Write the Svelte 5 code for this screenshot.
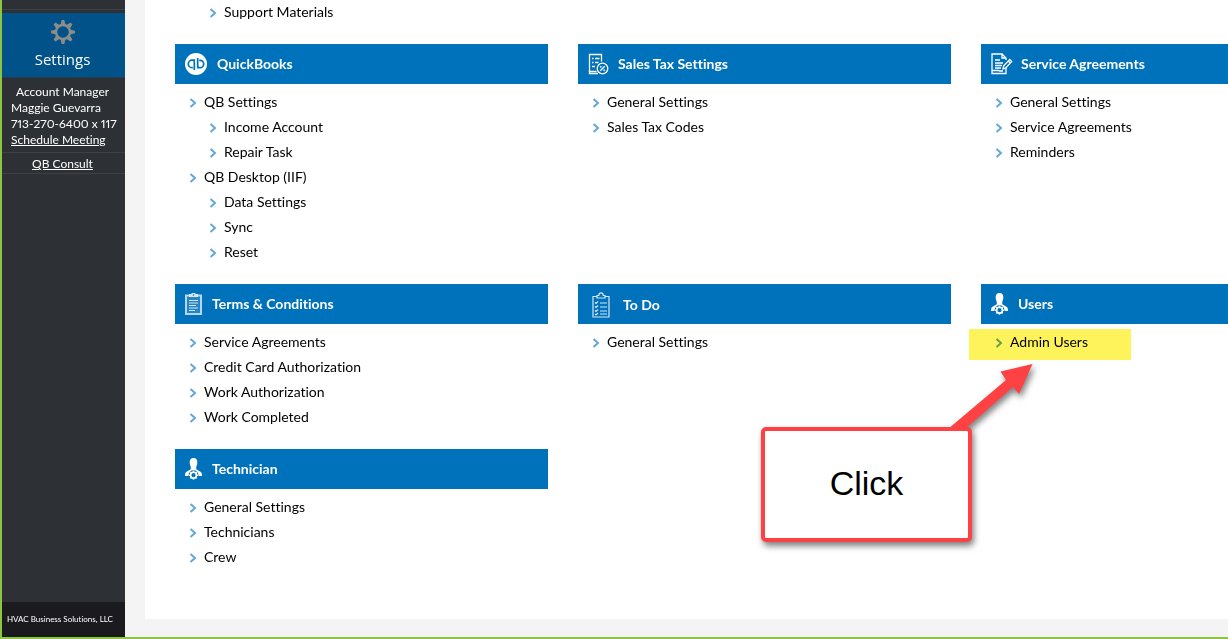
<script>
  const rows = [
    [
      {
        title: 'QuickBooks', icon: 'quickbooks',
        links: [['QB Settings'], ['Income Account', 1], ['Repair Task', 1], ['QB Desktop (IIF)'], ['Data Settings', 1], ['Sync', 1], ['Reset', 1]]
      },
      { title: 'Sales Tax Settings', icon: 'tax', links: [['General Settings'], ['Sales Tax Codes']] },
      { title: 'Service Agreements', icon: 'agreement', links: [['General Settings'], ['Service Agreements'], ['Reminders']] }
    ],
    [
      {
        title: 'Terms & Conditions', icon: 'terms',
        links: [['Service Agreements'], ['Credit Card Authorization'], ['Work Authorization'], ['Work Completed']]
      },
      { title: 'To Do', icon: 'todo', links: [['General Settings']] },
      { title: 'Users', icon: 'person', highlight: true, links: [['Admin Users']] }
    ],
    [{ title: 'Technician', icon: 'person', links: [['General Settings'], ['Technicians'], ['Crew']] }]
  ];
  const cards = rows.flat();
  const teeth = [0, 45, 90, 135, 180, 225, 270, 315];
</script>

{#snippet chevron()}
  <svg class="chevron" width="8" height="10" viewBox="0 0 8 10" aria-hidden="true">
    <path d="M1.5 1 6 5 1.5 9" fill="none" stroke="#65a8d6" stroke-width="2" />
  </svg>
{/snippet}

{#snippet item(label, nested)}
  <li class:nested><a href="#top">{@render chevron()}{label}</a></li>
{/snippet}

{#snippet icon(name)}
  {#if name === 'quickbooks'}
    <svg width="22" height="22" viewBox="0 0 22 22" aria-hidden="true">
      <circle cx="11" cy="11" r="11" fill="#fff" />
      <g fill="none" stroke="#0071bb" stroke-width="1.7">
        <path d="M9.3 17V7.2H7a3.7 3.7 0 0 0 0 7.4h.8" />
        <path d="M12.7 5v9.7H15a3.7 3.7 0 0 0 0-7.4h-.8" />
      </g>
    </svg>
  {:else if name === 'tax'}
    <svg width="22" height="22" viewBox="0 0 22 22" fill="none" stroke="#fff" stroke-width="1.3" aria-hidden="true">
      <path d="M13.500 8.500V1.500h-12v17h7M4 5.500h1.500M7 5.500h4.500M4 9.500h1.500M7 9.500h3.500M4 13.500h3" />
      <path d="M1.500 18v2.500H10" />
      <circle cx="14.500" cy="15.500" r="5.300" />
      <path d="m12.300 17.800 4.400-4.600" />
      <circle cx="12.700" cy="13.800" r=".3" /><circle cx="16.300" cy="17.200" r=".3" />
    </svg>
  {:else if name === 'agreement'}
    <svg width="22" height="22" viewBox="0 0 22 22" fill="none" stroke="#fff" stroke-width="1.3" aria-hidden="true">
      <path d="M15 7V5l-4-4H1v19.5h14V15M11 1v4h4M1 17.500h7" />
      <path d="M4 7h5M4 10h8M4 12.5h7M4 15h6M8 18h4" />
      <path d="m12 16 .7-3.2 6-6.3 2 2-6 6.4zM17.3 8l2 2" />
    </svg>
  {:else if name === 'terms'}
    <svg width="17" height="22" viewBox="0 0 17 22" aria-hidden="true">
      <path d="M1 2.5h15v18.5H1z" fill="#2584c5" stroke="#b5d6ec" stroke-width="2" />
      <path d="M4 4V1h2.5a2 2 0 0 1 4 0H13v3z" fill="#d5e8f4" />
      <path d="M4 7.5h9M4 10h9M4 12.5h7M4 15h9M4 17.5h6" stroke="#d0e5f3" stroke-width="1" />
      <circle cx="8.5" cy="2" r=".8" fill="#0071bb" />
    </svg>
  {:else if name === 'todo'}
    <svg width="18" height="26" viewBox="0 0 18 26" fill="none" stroke="#d5e8f4" stroke-width="1.2" aria-hidden="true">
      <path d="M5 4.500H1V25h16V4.500h-4" />
      <path d="M5 6V3.500h1.800C7 0 11 0 11.200 3.500H13V6z" />
      <path d="m3 10.5 1 1 2-2M3 14.5l1 1 2-2M3 18.5l1 1 2-2M3 22l1 1 2-2M8 11h7M8 15h7M8 19h7M8 22h7" />
    </svg>
  {:else}
    <svg width="17" height="22" viewBox="0 0 17 22" aria-hidden="true">
      <path d="M8.500 0C11.200 0 12.500 1.800 12.300 4.600c0 2-.8 3.400-1.100 4.600v2l4.300 2.500c1.200.8 1.500 2 1.500 4.300H0c0-2.300.3-3.500 1.500-4.300l4.300-2.500v-2C5.500 8 4.700 6.600 4.700 4.600 4.500 1.800 5.800 0 8.500 0z" fill="#fff" />
      <circle cx="8.500" cy="17.200" r="4.900" fill="#0071bb" />
      <circle cx="8.500" cy="17.200" r="2.900" fill="none" stroke="#fff" stroke-width="1.600" />
      <g stroke="#fff" stroke-width="1.500">
        {#each teeth as angle}
          <path d="M8.500 14v-1.300" transform="rotate({angle} 8.5 17.2)" />
        {/each}
      </g>
    </svg>
  {/if}
{/snippet}

<div class="page" id="top">
  <aside class="sidebar">
    <div class="previous"></div>
    <a class="settings" href="#top">
      <svg width="24" height="24" viewBox="0 0 24 24" aria-hidden="true">
        <circle cx="12" cy="12" r="7" fill="none" stroke="#8c8c8c" stroke-width="2.4" />
        <g fill="#8c8c8c">
          {#each teeth as angle}
            <path d="m9.5 5 1.200-5h2.600l1.200 5z" transform="rotate({angle} 12 12)" />
          {/each}
        </g>
      </svg>
      <span>Settings</span>
    </a>
    <div class="manager">
      <div class="role">Account Manager</div>
      <div>Maggie Guevarra</div>
      <div class="phone">713-270-6400 x 117</div>
      <a href="#top">Schedule Meeting</a>
    </div>
    <div class="consult"><a href="#top">QB Consult</a></div>
    <footer>HVAC Business Solutions, LLC</footer>
  </aside>

  <main>
    <div class="panel">
      <ul class="support">{@render item('Support Materials', true)}</ul>
      <div class="cards">
        {#each cards as card}
          <section>
            <h2 class={card.icon}>{@render icon(card.icon)}{card.title}</h2>
            <ul>
              {#each card.links as [label, nested]}
                {@render item(label, !!nested)}
              {/each}
            </ul>
            {#if card.highlight}<div class="highlight"></div>{/if}
          </section>
        {/each}
      </div>
    </div>
  </main>

  <div class="callout">
    <svg class="arrow" width="100" height="80" viewBox="0 0 100 80" aria-hidden="true">
      <path d="M84.500 4 71 34 65 27 17 69H0L58 20 52.500 11.500z" fill="#fe4244" />
    </svg>
    <div class="note">Click</div>
  </div>
</div>

<style>
  :global(body) { margin: 0; }
  .page {
    position: relative;
    display: flex;
    box-sizing: border-box;
    min-height: 100vh;
    overflow: hidden;
    border-left: 2px solid #8cc63f;
    border-bottom: 2px solid #8cc63f;
    background: #f4f4f4;
    font-family: Lato, sans-serif;
    font-variant-ligatures: none;
    color: #000;
  }
  .sidebar {
    display: flex;
    flex: 0 0 123px;
    flex-direction: column;
    min-width: 0;
    background: #2d3035;
    color: #fff;
    font-size: 12px;
    line-height: 16px;
  }
  .sidebar a { color: #fff; }
  .previous {
    height: 9px;
    margin-bottom: 3px;
    border-bottom: 1px solid #3d4045;
  }
  .sidebar .settings {
    display: flex;
    flex-direction: column;
    align-items: center;
    height: 57px;
    padding-top: 7px;
    padding-right: 2px;
    border-bottom: 1px solid #24404f;
    background: #005288;
    font: 15px/30px "Open Sans", sans-serif;
    text-decoration: none;
  }
  .settings svg { flex: none; }
  .manager {
    padding: 6px 0 4px 9px;
    border-bottom: 1px solid #3d4045;
    white-space: nowrap;
  }
  .role { padding-left: 5px; }
  .phone { font-variant-numeric: proportional-nums; }
  .consult {
    padding: 3px 2px 1px 0;
    border-bottom: 1px solid #3d4045;
    text-align: center;
  }
  footer {
    margin-top: auto;
    padding-left: 5px;
    background: #1b1b1f;
    font-size: 8px;
    line-height: 35px;
    white-space: nowrap;
  }
  main {
    flex: 1;
    min-width: 0;
    padding: 0 0 18px 20px;
  }
  .panel {
    box-sizing: border-box;
    min-height: 100%;
    padding: 0 30px 30px;
    background: #fff;
  }
  ul { margin: 0; padding: 0; list-style: none; }
  .cards {
    display: grid;
    grid-template-columns: repeat(3, minmax(373px, 1fr));
    gap: 19px 30px;
    margin-top: 19px;
  }
  section { position: relative; }
  h2 {
    display: flex;
    box-sizing: border-box;
    align-items: center;
    gap: 10px;
    height: 40px;
    margin: 0 0 6px;
    padding: 0 0 2px 10px;
    background: #0071bb;
    color: #fff;
    font-size: 14px;
    font-weight: 700;
  }
  h2 svg { margin-top: 2px; }
  h2.tax, h2.agreement { gap: 8px; }
  h2.todo {
    gap: 13px;
    padding-top: 2px;
    padding-left: 14px;
  }
  li {
    display: flex;
    padding: 0 0 2px 14px;
    font-size: 14px;
    line-height: 23px;
  }
  li.nested { padding-left: 34px; }
  li a {
    display: flex;
    align-items: center;
    gap: 7px;
    color: #000;
    text-decoration: none;
  }
  .chevron { margin-top: 2px; }
  .highlight {
    position: absolute;
    top: 45px;
    left: -12px;
    width: 162px;
    height: 31px;
    background: #fff35c;
    mix-blend-mode: multiply;
    pointer-events: none;
  }
  .callout {
    position: absolute;
    top: 427px;
    left: 759px;
    filter: drop-shadow(2px 4px 3px rgba(0, 0, 0, 0.5));
  }
  .arrow {
    position: absolute;
    top: -67px;
    left: 187px;
  }
  .note {
    position: relative;
    box-sizing: border-box;
    width: 211px;
    padding: 32px 0 34px;
    border: 4px solid #fe4244;
    border-radius: 5px;
    background: #fff;
    font: 34px/41px "Liberation Sans", Arial, sans-serif;
    text-align: center;
  }
</style>
